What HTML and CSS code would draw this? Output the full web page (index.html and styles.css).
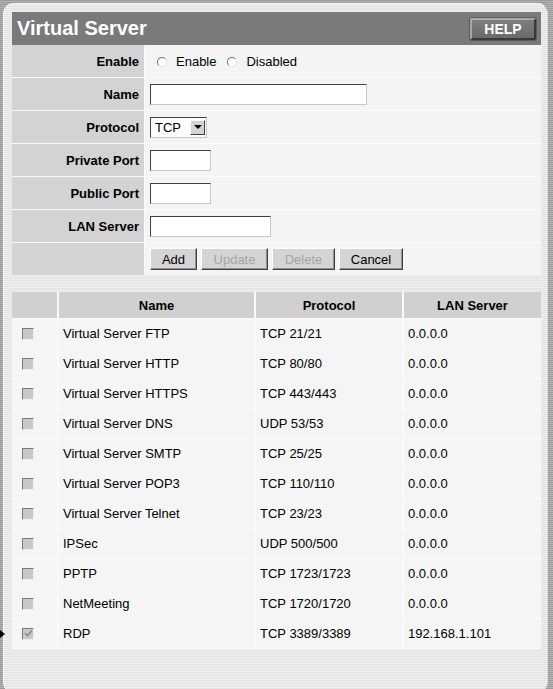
FILE: index.html
```html
<!DOCTYPE html>
<html>
<head>
<meta charset="utf-8">
<link rel="stylesheet" href="styles.css">
</head>
<body>
<div class="panel">
  <div class="titlebar">
    <span class="title">Virtual Server</span>
    <span class="help">HELP</span>
  </div>
  <table class="form">
    <tr>
      <td class="lbl">Enable</td>
      <td class="val"><span class="radio"></span><span class="rtext">Enable</span><span class="radio"></span><span class="rtext">Disabled</span></td>
    </tr>
    <tr>
      <td class="lbl">Name</td>
      <td class="val"><span class="field w-name"></span></td>
    </tr>
    <tr>
      <td class="lbl">Protocol</td>
      <td class="val"><span class="select"><span class="sel-text">TCP</span><span class="sel-btn"><span class="tri"></span></span></span></td>
    </tr>
    <tr>
      <td class="lbl">Private Port</td>
      <td class="val"><span class="field w-port"></span></td>
    </tr>
    <tr>
      <td class="lbl">Public Port</td>
      <td class="val"><span class="field w-port"></span></td>
    </tr>
    <tr>
      <td class="lbl">LAN Server</td>
      <td class="val"><span class="field w-lan"></span></td>
    </tr>
    <tr>
      <td class="lbl"></td>
      <td class="val btns"><span class="btn w-add">Add</span><span class="btn w-upd dis">Update</span><span class="btn w-del dis">Delete</span><span class="btn w-can">Cancel</span></td>
    </tr>
  </table>
  <table class="list">
    <tr class="head">
      <th class="c1"></th><th class="c2">Name</th><th class="c3">Protocol</th><th class="c4">LAN Server</th>
    </tr>
    <tr><td class="cb"><span class="chk"></span></td><td>Virtual Server FTP</td><td>TCP 21/21</td><td>0.0.0.0</td></tr>
    <tr><td class="cb"><span class="chk"></span></td><td>Virtual Server HTTP</td><td>TCP 80/80</td><td>0.0.0.0</td></tr>
    <tr><td class="cb"><span class="chk"></span></td><td>Virtual Server HTTPS</td><td>TCP 443/443</td><td>0.0.0.0</td></tr>
    <tr><td class="cb"><span class="chk"></span></td><td>Virtual Server DNS</td><td>UDP 53/53</td><td>0.0.0.0</td></tr>
    <tr><td class="cb"><span class="chk"></span></td><td>Virtual Server SMTP</td><td>TCP 25/25</td><td>0.0.0.0</td></tr>
    <tr><td class="cb"><span class="chk"></span></td><td>Virtual Server POP3</td><td>TCP 110/110</td><td>0.0.0.0</td></tr>
    <tr><td class="cb"><span class="chk"></span></td><td>Virtual Server Telnet</td><td>TCP 23/23</td><td>0.0.0.0</td></tr>
    <tr><td class="cb"><span class="chk"></span></td><td>IPSec</td><td>UDP 500/500</td><td>0.0.0.0</td></tr>
    <tr><td class="cb"><span class="chk"></span></td><td>PPTP</td><td>TCP 1723/1723</td><td>0.0.0.0</td></tr>
    <tr><td class="cb"><span class="chk"></span></td><td>NetMeeting</td><td>TCP 1720/1720</td><td>0.0.0.0</td></tr>
    <tr><td class="cb"><span class="chk on"><svg width="9" height="9" viewBox="0 0 9 9"><path d="M1 4 L3.5 6.5 L8 1.5" stroke="#8a8a8a" stroke-width="1.6" fill="none"/></svg></span></td><td>RDP</td><td>TCP 3389/3389</td><td>192.168.1.101</td></tr>
  </table>
</div>
<span class="pointer"></span>
</body>
</html>
```
FILE: styles.css
```css
html, body {
  margin: 0;
  padding: 0;
}
body {
  width: 553px;
  height: 689px;
  overflow: hidden;
  position: relative;
  font-family: "Liberation Sans", Arial, sans-serif;
  font-size: 13px;
  color: #000;
  background: repeating-linear-gradient(to bottom, #9a9a9a 0, #9a9a9a 1px, #b4b4b4 1px, #b4b4b4 2px);
}
.panel {
  margin: 3px 5px 0 3px;
  height: 690px;
  box-sizing: border-box;
  border-radius: 11px;
  border: 1px solid #fafafa;
  border-right-color: #d8d8d8;
  padding: 8px 6px 0 8px;
  background: repeating-linear-gradient(to bottom, #e4e4e4 0, #e4e4e4 1px, #eeeeee 1px, #eeeeee 2px);
}
.titlebar {
  height: 33px;
  background: #7a7a7a;
  display: flex;
  align-items: center;
  justify-content: space-between;
  padding: 0 3px 0 5px;
}
.title {
  color: #fff;
  font-weight: bold;
  font-size: 20px;
}
.help {
  width: 66px;
  height: 22px;
  box-sizing: border-box;
  background: linear-gradient(#7e7e7e, #6a6a6a);
  border: 2px solid;
  border-color: #a8a8a8 #3a3a3a #3a3a3a #a8a8a8;
  border-radius: 2px;
  color: #fff;
  font-weight: bold;
  font-size: 14px;
  display: flex;
  align-items: center;
  justify-content: center;
  box-shadow: 0 0 0 1px #5a5a5a;
  margin-right: 2px;
}
table {
  border-collapse: collapse;
  width: 529px;
}
.form td {
  height: 32px;
  padding: 0;
  border-bottom: 1px solid #fafafa;
  border-right: 1px solid #fafafa;
}
.form tr:last-child td {
  border-bottom: none;
}
.form .lbl {
  width: 127px;
  background: #d3d3d3;
  text-align: right;
  font-weight: bold;
  padding-right: 5px;
  border-right: 1px solid #fafafa;
}
.form .val {
  background: #f4f4f4;
  padding-left: 5px;
  border-right: none;
}
.radio {
  display: inline-block;
  width: 10px;
  height: 10px;
  box-sizing: border-box;
  border-radius: 50%;
  border: 1px solid;
  border-color: #707070 #e0e0e0 #e0e0e0 #707070;
  background: #fff;
  vertical-align: -1px;
  margin-left: 7px;
}
.rtext {
  margin: 0 4px 0 9px;
}
.field {
  display: inline-block;
  height: 21px;
  box-sizing: border-box;
  background: #fff;
  border: 1px solid;
  border-color: #404040 #c8c8c8 #c8c8c8 #404040;
  vertical-align: middle;
}
.w-name { width: 217px; }
.w-port { width: 61px; }
.w-lan { width: 121px; }
.select {
  display: inline-flex;
  align-items: center;
  width: 57px;
  height: 21px;
  box-sizing: border-box;
  border: 1px solid;
  border-color: #404040 #c8c8c8 #c8c8c8 #404040;
  background: #fff;
  vertical-align: middle;
  justify-content: space-between;
  padding: 0 1px 0 4px;
}
.sel-text {
  font-size: 13px;
}
.sel-btn {
  width: 15px;
  height: 15px;
  box-sizing: border-box;
  background: #d4d4d4;
  border: 1px solid;
  border-color: #fff #404040 #404040 #fff;
  display: flex;
  align-items: center;
  justify-content: center;
}
.tri {
  width: 0;
  height: 0;
  border-left: 4px solid transparent;
  border-right: 4px solid transparent;
  border-top: 4px solid #000;
}
.btns {
  display: flex;
  align-items: center;
  gap: 4px;
  height: 32px;
}
.btn {
  height: 22px;
  box-sizing: border-box;
  background: #d4d4d4;
  border: 1px solid;
  border-color: #fff #404040 #404040 #fff;
  box-shadow: inset -1px -1px 0 #909090;
  display: flex;
  align-items: center;
  justify-content: center;
  font-size: 13px;
}
.btn.dis {
  color: #a4a4a4;
}
.w-add { width: 47px; }
.w-upd { width: 67px; }
.w-del { width: 63px; }
.w-can { width: 64px; }
.list {
  margin-top: 17px;
}
.list th {
  height: 26px;
  background: #d0d0d0;
  font-weight: bold;
  font-size: 13px;
  text-align: center;
  padding: 0;
  border-right: 2px solid #fafafa;
  border-bottom: 1px solid #fafafa;
}
.list th:last-child, .list td:last-child {
  border-right: none;
}
.list .c1 { width: 45px; }
.list .c2 { width: 195px; }
.list .c3 { width: 146px; }
.list td {
  height: 29px;
  padding: 0 0 0 4px;
  background: #f5f5f5;
  border-right: 2px solid #fafafa;
  border-bottom: 1px solid #fafafa;
  white-space: nowrap;
}
.list td.cb {
  padding-left: 10px;
}
.chk {
  display: flex;
  align-items: center;
  justify-content: center;
  width: 12px;
  height: 12px;
  box-sizing: border-box;
  border: 1px solid;
  border-color: #7a7a7a #f0f0f0 #f0f0f0 #7a7a7a;
  background: #c8c8c8;
}
.pointer {
  position: absolute;
  left: 0;
  top: 630px;
  width: 0;
  height: 0;
  border-top: 4px solid transparent;
  border-bottom: 4px solid transparent;
  border-left: 5px solid #000;
}
```
